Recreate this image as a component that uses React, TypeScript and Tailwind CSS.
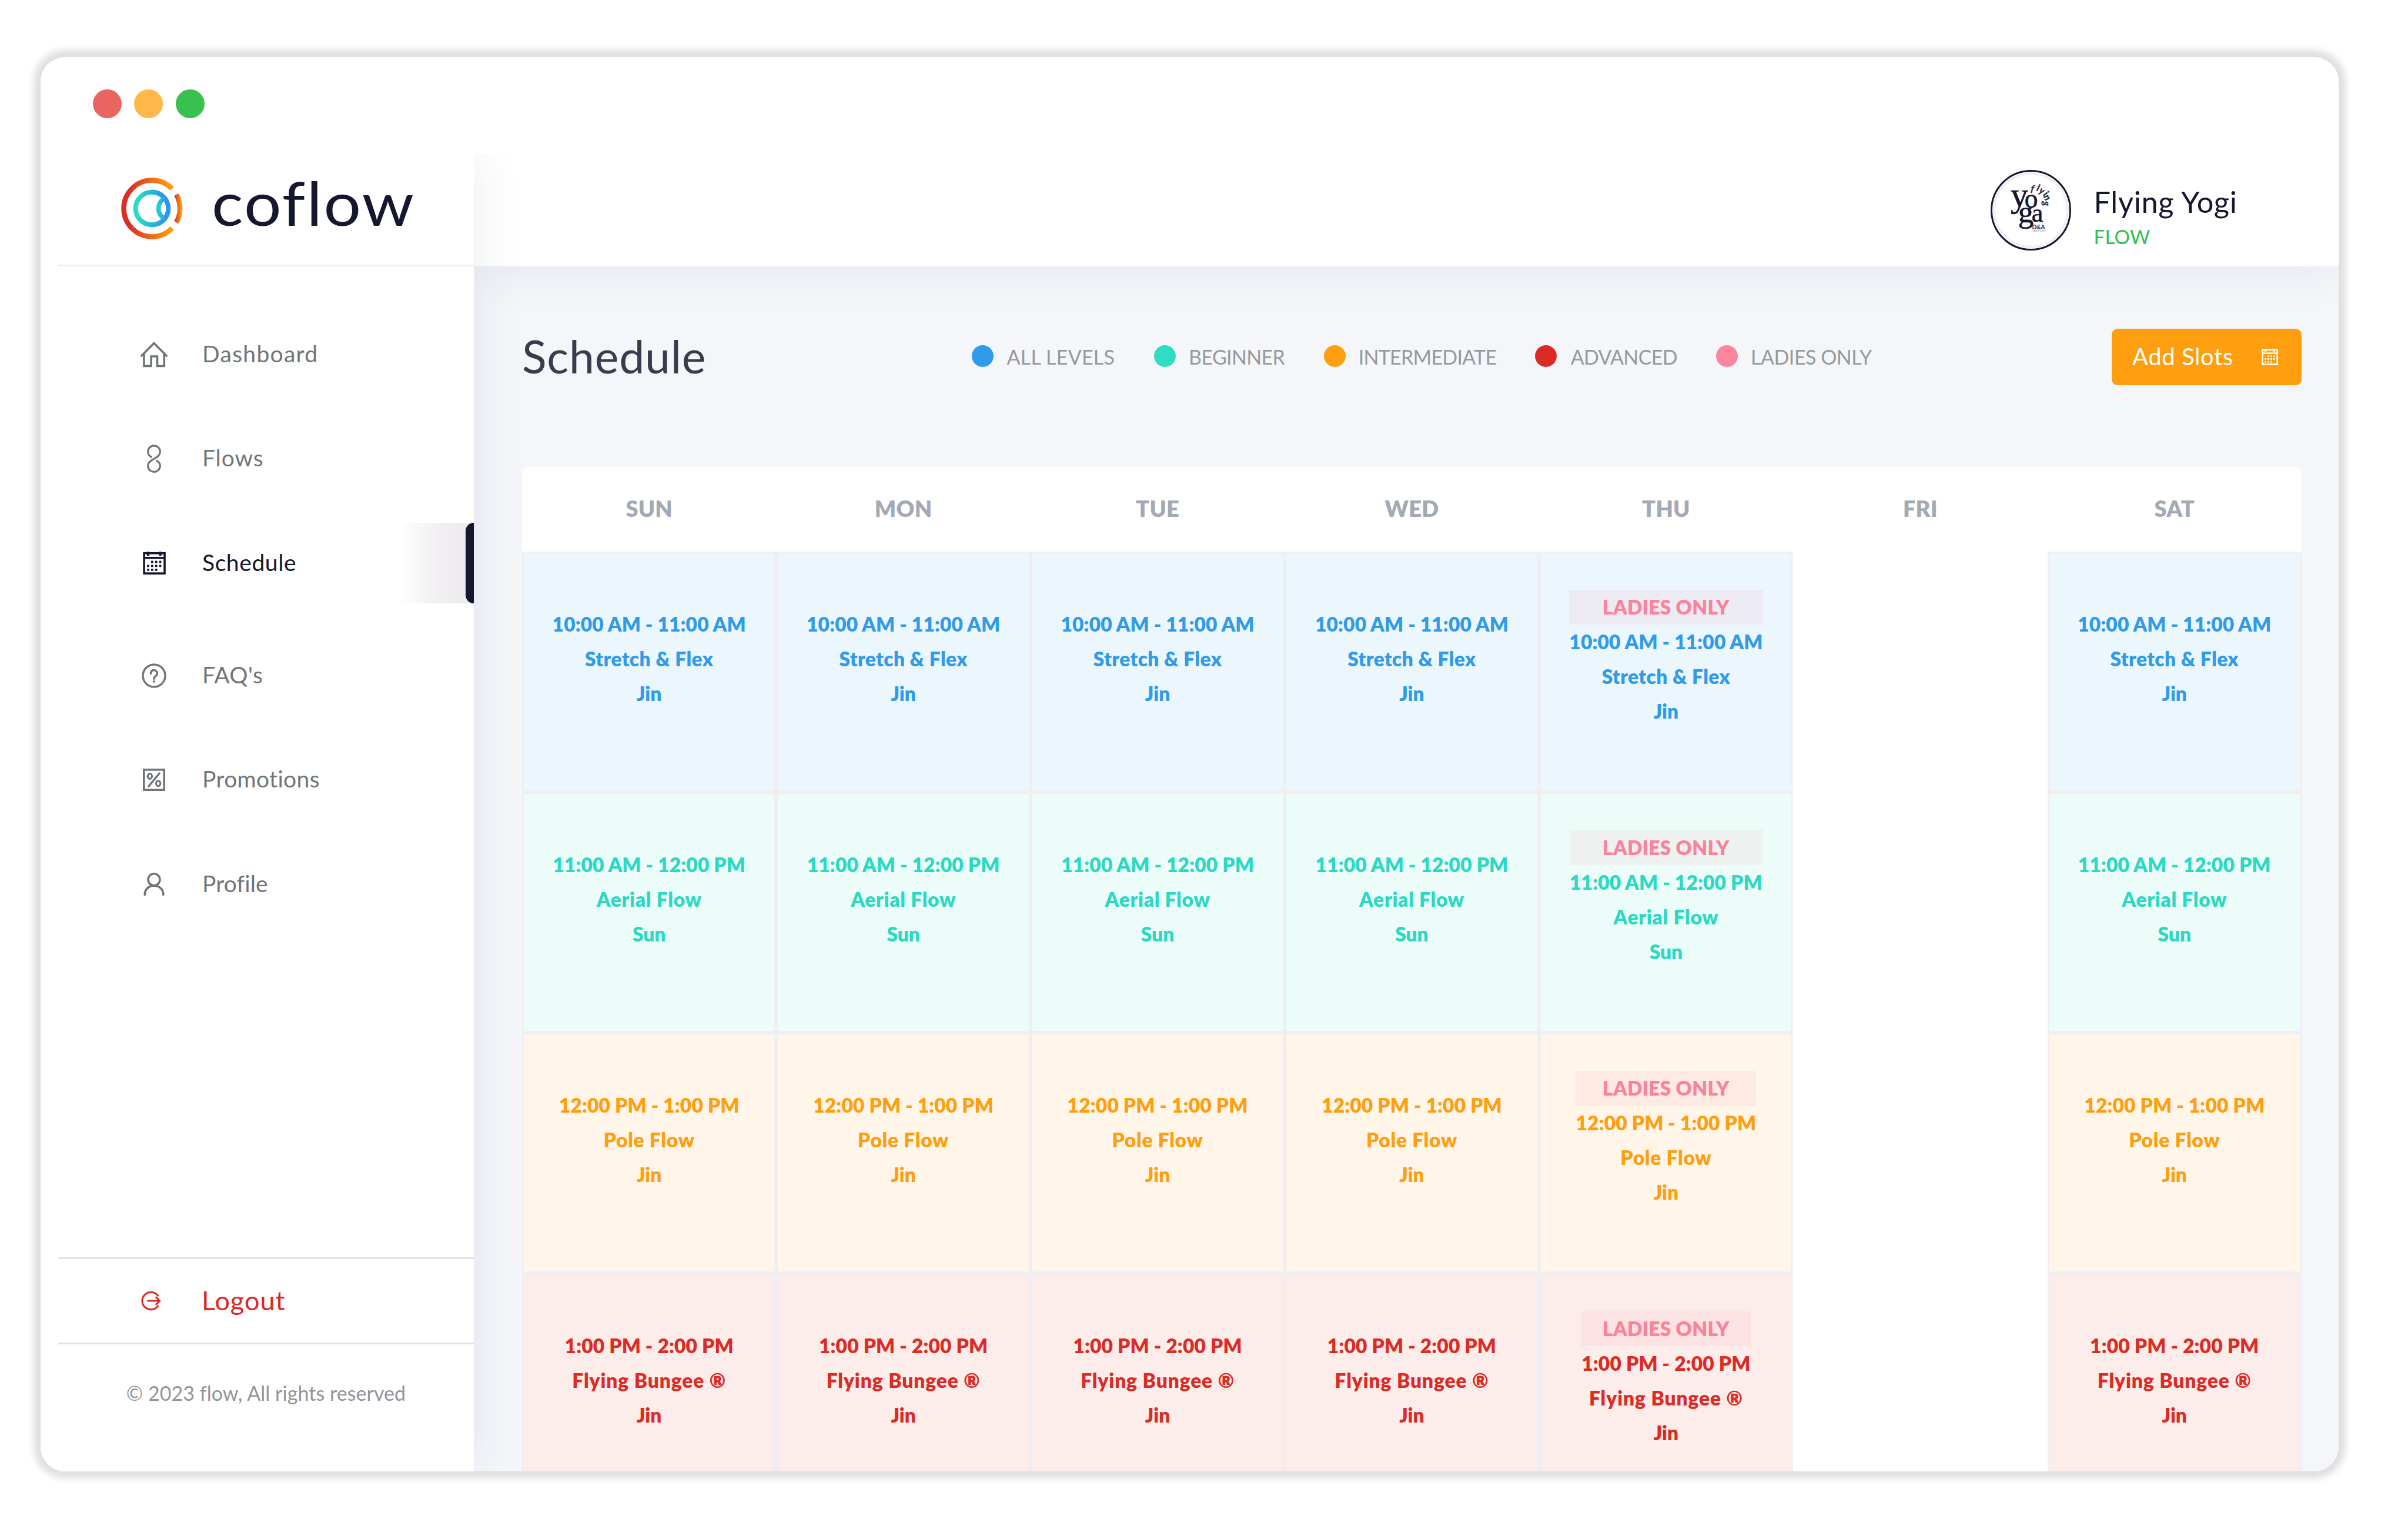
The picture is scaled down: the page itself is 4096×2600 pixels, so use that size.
import React from 'react';

const stroke = { fill: 'none', stroke: 'currentColor', strokeWidth: 3.6 } as const;

function HomeIcon() {
  return (
    <svg viewBox="0 0 48 48" className="size-12" {...stroke} strokeLinecap="round">
      <path d="M7 22.5V43.5H19V27H29.5V43.5H41.3V22.5" />
      <path d="M2.8 26 24 4.6 45.2 26" />
    </svg>
  );
}

function FlowsIcon() {
  return (
    <svg viewBox="0 0 48 48" className="size-12" {...stroke} strokeWidth={3.2} strokeLinecap="round">
      <path d="M19.5 21C15.5 19 13.6 16 13.6 12.2A10.4 10.4 0 0 1 34.4 12.2C34.4 17.5 31 20.2 24 24.1C17 28 13.6 31 13.6 36A10.4 10.4 0 0 0 34.4 36C34.4 32.2 32 29.4 28.4 27.4" />
    </svg>
  );
}

function CalendarIcon({ className, weight = 3.6 }: { className: string; weight?: number }) {
  const dots = [
    [20.4, 22], [27.2, 22], [34, 22],
    [13.6, 28.8], [20.4, 28.8], [27.2, 28.8], [34, 28.8],
    [13.6, 35.4], [20.4, 35.4], [27.2, 35.4],
  ];
  return (
    <svg viewBox="4.5 4.5 39 39" className={className} fill="none" stroke="currentColor" strokeWidth={weight}>
      <rect x="6.6" y="7.2" width="34.9" height="34.4" />
      <path d="M6 15.2H42" />
      <path d="M13.6 4.5V11.6M34.2 4.5V11.6" strokeWidth={4} />
      {dots.map(([x, y]) => (
        <rect key={`${x}-${y}`} x={x - 1.9} y={y - 1.9} width="3.8" height="3.8" fill="currentColor" stroke="none" />
      ))}
    </svg>
  );
}

function FaqIcon() {
  return (
    <svg viewBox="0 0 48 48" className="size-12" {...stroke} strokeWidth={3.4}>
      <circle cx="24" cy="24" r="19" />
      <path d="M18.6 20.4A5.4 5.4 0 1 1 27.2 24.2C25 25.8 24 26.8 24 29.4" strokeLinecap="round" />
      <circle cx="24" cy="33.8" r="2.1" fill="currentColor" stroke="none" />
    </svg>
  );
}

function PromotionsIcon() {
  return (
    <svg viewBox="0 0 48 48" className="size-12" {...stroke}>
      <rect x="6.8" y="6.8" width="34.4" height="34.4" />
      <path d="M33.2 13 14.8 35.2" strokeWidth={3.4} strokeLinecap="round" />
      <ellipse cx="16.9" cy="18" rx="3.6" ry="4.4" strokeWidth={3.2} />
      <ellipse cx="31.2" cy="30.2" rx="3.6" ry="4.4" strokeWidth={3.2} />
    </svg>
  );
}

function ProfileIcon() {
  return (
    <svg viewBox="0 0 48 48" className="size-12" {...stroke} strokeLinecap="round">
      <circle cx="24" cy="16.8" r="10" />
      <path d="M8.2 42.5C8.2 33.5 14.8 27 24 27S39.8 33.5 39.8 42.5" />
    </svg>
  );
}

function LogoutIcon() {
  return (
    <svg viewBox="0 0 34 34" className="size-[34px]" fill="none" stroke="currentColor" strokeWidth={3} strokeLinecap="round" strokeLinejoin="round">
      <path d="M28.6 8.2A14.8 14.8 0 1 0 28.6 25.8" />
      <path d="M11.5 17H31.5M25.8 11.2 31.8 17 25.8 22.8" />
    </svg>
  );
}

function CoflowMark() {
  return (
    <svg viewBox="-78 -78 156 156" className="size-[105px] shrink-0" fill="none" strokeWidth={12.6}>
      <defs>
        <linearGradient id="warm" gradientUnits="userSpaceOnUse" x1="-70" y1="0" x2="52" y2="0">
          <stop offset="0.1" stopColor="#dc2d27" />
          <stop offset="0.95" stopColor="#ff9d0b" />
        </linearGradient>
        <linearGradient id="warmArc" gradientUnits="userSpaceOnUse" x1="57" y1="0" x2="76" y2="0">
          <stop offset="0" stopColor="#dc2d27" />
          <stop offset="0.9" stopColor="#ff9d0b" />
        </linearGradient>
        <linearGradient id="cool" gradientUnits="userSpaceOnUse" x1="-47" y1="0" x2="47" y2="0">
          <stop offset="0.12" stopColor="#29dcc4" />
          <stop offset="0.85" stopColor="#2c96ea" />
        </linearGradient>
        <linearGradient id="coolArc" gradientUnits="userSpaceOnUse" x1="10" y1="0" x2="40" y2="0">
          <stop offset="0" stopColor="#29dcc4" />
          <stop offset="0.9" stopColor="#2c96ea" />
        </linearGradient>
      </defs>
      <path d="M51 -49.8A71.3 71.3 0 1 0 51 49.8" stroke="url(#warm)" />
      <path d="M61.5 -35A70.5 70.5 0 0 1 61.5 35" stroke="url(#warmArc)" />
      <circle r="41.4" stroke="url(#cool)" strokeWidth={12} />
      <path d="M32.5 -26A29 29 0 0 0 32.5 26" stroke="url(#coolArc)" strokeWidth={11.5} />
    </svg>
  );
}

function Avatar() {
  const flying: [string, number, number, number][] = [
    ['f', 104, 55, 8], ['l', 117, 53, 18], ['y', 125, 59, 30],
    ['i', 133, 65, 45], ['n', 135, 73, 62], ['g', 132, 85, 85],
  ];
  return (
    <svg viewBox="0 0 202 202" className="size-[137px] shrink-0">
      <circle cx="101" cy="101" r="92" fill="none" stroke="#f1eff4" strokeWidth="6" />
      <circle cx="101" cy="101" r="98.8" fill="none" stroke="#15172f" strokeWidth="4.4" />
      <g fill="#15172f" stroke="#15172f" strokeWidth="1" fontFamily='"Liberation Serif", serif'>
        <text x="50" y="91" fontSize="88">y</text>
        <text x="85" y="94" fontSize="67">o</text>
        <text x="69" y="131" fontSize="78">g</text>
        <text x="103" y="130" fontSize="65">a</text>
      </g>
      <g fill="#2a2c42" stroke="#2a2c42" strokeWidth="0.5" fontFamily="Lato, sans-serif" fontStyle="italic" fontWeight="700" fontSize="24" textAnchor="middle">
        {flying.map(([ch, x, y, a]) => (
          <text key={ch} transform={`translate(${x} ${y}) rotate(${a})`}>{ch}</text>
        ))}
      </g>
      <text x="104" y="149" fontSize="16" fontWeight="700" letterSpacing="-0.8" fill="#3b3d4e" fontFamily='"Liberation Sans", sans-serif'>D&amp;A</text>
      <text x="105" y="155" fontSize="5" fill="#8d8f99" fontFamily='"Liberation Sans", sans-serif'>DANCE &amp; ART</text>
    </svg>
  );
}

const nav = [
  { label: 'Dashboard', icon: <HomeIcon />, cls: 'tracking-[1.3px]' },
  { label: 'Flows', icon: <FlowsIcon />, cls: 'tracking-[0.9px]' },
  { label: 'Schedule', icon: <CalendarIcon className="size-[39px]" />, cls: 'tracking-[0.6px]', active: true },
  { label: "FAQ's", icon: <FaqIcon />, cls: 'tracking-[0.42px]', gap: true },
  { label: 'Promotions', icon: <PromotionsIcon />, cls: 'tracking-[0.34px]' },
  { label: 'Profile', icon: <ProfileIcon />, cls: 'tracking-[0.1px]' },
];

const legend = [
  { label: 'ALL LEVELS', dot: 'bg-[#2f9bea]', cls: 'w-[310.6px] gap-[23px] tracking-[0.24px]' },
  { label: 'BEGINNER', dot: 'bg-[#2fdcc6]', cls: 'w-[288.7px] gap-[22px] tracking-[-0.64px]' },
  { label: 'INTERMEDIATE', dot: 'bg-[#ff9e0e]', cls: 'w-[358.9px] gap-[22px] tracking-[-0.74px]' },
  { label: 'ADVANCED', dot: 'bg-[#dc2b25]', cls: 'w-[308.4px] gap-[24px] tracking-[-0.67px]' },
  { label: 'LADIES ONLY', dot: 'bg-[#fb859d]', cls: 'gap-[22px] tracking-[-0.51px]' },
];

const days = ['SUN', 'MON', 'TUE', 'WED', 'THU', 'FRI', 'SAT'];

const slots = [
  { time: '10:00 AM - 11:00 AM', name: 'Stretch & Flex', coach: 'Jin', cls: 'bg-[#ebf6fd] text-[#2f9bea]', track: 'tracking-[0.42px]' },
  { time: '11:00 AM - 12:00 PM', name: 'Aerial Flow', coach: 'Sun', cls: 'bg-[#ecfcf9] text-[#2bd9c3]', track: 'tracking-[0.73px]' },
  { time: '12:00 PM - 1:00 PM', name: 'Pole Flow', coach: 'Jin', cls: 'bg-[#fff5e9] text-[#ff9e0e]', track: 'tracking-[0.73px]' },
  { time: '1:00 PM - 2:00 PM', name: 'Flying Bungee ®', coach: 'Jin', cls: 'bg-[#fcecea] text-[#dc2b25]', track: 'tracking-[0.9px]' },
];

function Sidebar() {
  return (
    <aside className="relative z-20 flex w-[737px] shrink-0 flex-col bg-white pl-[30px] shadow-[0_0_84px_rgba(25,45,70,0.085)]">
      <div className="flex h-[191px] shrink-0 items-center border-b-[3px] border-[#eef1f7] pl-[107px]">
        <div className="flex pb-[3px]">
          <CoflowMark />
        </div>
        <span className="ml-[49px] origin-left scale-x-[1.1] pb-[22px] text-[102px] leading-none tracking-[2.2px] text-[#15172f]">coflow</span>
      </div>
      <nav className="flex flex-col gap-[40.4px] pt-[81px]">
        {nav.map((n) => (
          <div
            key={n.label}
            className={`relative flex h-[137px] items-center pl-[139px] ${n.gap ? 'mt-[14px]' : ''} ${n.active ? 'text-[#15172f]' : 'text-[#6f7577]'}`}
          >
            <span className="flex size-12 items-center justify-center">{n.icon}</span>
            <span className={`ml-[58px] pb-[3px] text-[39px] ${n.cls}`}>{n.label}</span>
            {n.active && (
              <span className="absolute inset-y-0 right-0 flex w-[126px] justify-end bg-gradient-to-r from-white via-[#f2f0f2] to-[#eceaed]">
                <span className="w-[14px] rounded-l-[14px] bg-[#15172f]" />
              </span>
            )}
          </div>
        ))}
      </nav>
      <div className="mt-auto flex h-[148px] shrink-0 items-center border-y-[3px] border-[#e0e2e6] pl-[141px] text-[#df2721]">
        <LogoutIcon />
        <span className="ml-[69px] text-[45px] tracking-[1px]">Logout</span>
      </div>
      <div className="mb-[52px] flex h-[164px] shrink-0 items-center justify-center text-[34px] tracking-[0.05px] text-[#8f959a]">
        © 2023 flow, All rights reserved
      </div>
    </aside>
  );
}

function Header() {
  return (
    <header className="relative z-10 flex h-[191px] shrink-0 items-center justify-end bg-white shadow-[0_0_84px_rgba(25,45,70,0.085)]">
      <div className="flex pb-px">
        <Avatar />
      </div>
      <div className="ml-[39px] flex w-[416px] flex-col pt-[23px]">
        <span className="text-[50.5px] leading-[66px] tracking-[0.7px] text-[#15172f]">Flying Yogi</span>
        <span className="text-[33px] leading-[52px] tracking-[0.3px] text-[#2fc04f]">FLOW</span>
      </div>
    </header>
  );
}

function Schedule() {
  return (
    <main className="flex min-h-0 flex-1 flex-col pl-[82px] pr-[62.5px] pt-[106px]">
      <div className="flex h-[96px] shrink-0 items-center">
        <h1 className="w-[764.5px] shrink-0 pb-1 text-[77px] leading-none tracking-[0.8px] text-[#3a3c4d]">Schedule</h1>
        <div className="flex items-center pb-px text-[34px] text-[#949a9c]">
          {legend.map((l) => (
            <div key={l.label} className={`flex items-center whitespace-nowrap ${l.cls}`}>
              <span className={`mb-[2px] size-[37px] shrink-0 rounded-full ${l.dot}`} />
              <span>{l.label}</span>
            </div>
          ))}
        </div>
        <button className="ml-auto flex h-[96px] w-[323px] items-center justify-between rounded-[10px] bg-[#ff9e0e] pl-[35px] pr-[40px] text-white">
          <span className="pb-[3px] text-[40px] tracking-[0.6px]">Add Slots</span>
          <CalendarIcon className="size-[28px]" weight={3.6} />
        </button>
      </div>
      <section className="mt-[138.5px] shrink-0 overflow-hidden rounded-t-[12px] bg-white">
        <div className="grid h-[144.5px] grid-cols-7 items-center text-center text-[38px] font-extrabold tracking-[0.2px] text-[#a3aab5]">
          {days.map((d) => (
            <div key={d} className="pb-[2px]">{d}</div>
          ))}
        </div>
        {slots.map((s) => (
          <div key={s.time} className="grid h-[408.9px] grid-cols-7">
            {days.map((d) =>
              d === 'FRI' ? (
                <div key={d} />
              ) : (
                <div
                  key={d}
                  className={`flex flex-col items-center justify-center border-[3px] border-[#f0eef2] pb-[43px] text-[33.5px] font-extrabold leading-[59px] ${s.cls}`}
                >
                  <div className="flex flex-col text-center">
                    {d === 'THU' && (
                      <span className="bg-[#ff829b]/9 tracking-[0.25px] text-[#fb829b]">LADIES ONLY</span>
                    )}
                    <span className="tracking-[0.15px]">{s.time}</span>
                    <span className={s.track}>{s.name}</span>
                    <span>{s.coach}</span>
                  </div>
                </div>
              ),
            )}
          </div>
        ))}
      </section>
    </main>
  );
}

export default function App() {
  return (
    <div className="h-[2600px] w-[4096px] overflow-hidden bg-white pl-[69px] pt-[97px] font-['Lato',sans-serif] [font-variant-ligatures:none]">
      <div className="h-[2405px] w-[3908.5px] rounded-[42px] shadow-[0_0_12px_12px_rgba(0,0,0,0.125)]">
        <div className="flex h-full flex-col overflow-hidden rounded-[42px] bg-white">
          <div className="flex h-[165px] shrink-0 gap-[21.5px] pl-[88.5px] pt-[54.5px]">
            <span className="size-[49px] rounded-full bg-[#ea6460]" />
            <span className="size-[49px] rounded-full bg-[#ffb74a]" />
            <span className="size-[49px] rounded-full bg-[#38c14e]" />
          </div>
          <div className="flex min-h-0 flex-1 overflow-hidden">
            <Sidebar />
            <div className="flex min-w-0 flex-1 flex-col bg-[#f4f6fa]">
              <Header />
              <Schedule />
            </div>
          </div>
        </div>
      </div>
    </div>
  );
}
